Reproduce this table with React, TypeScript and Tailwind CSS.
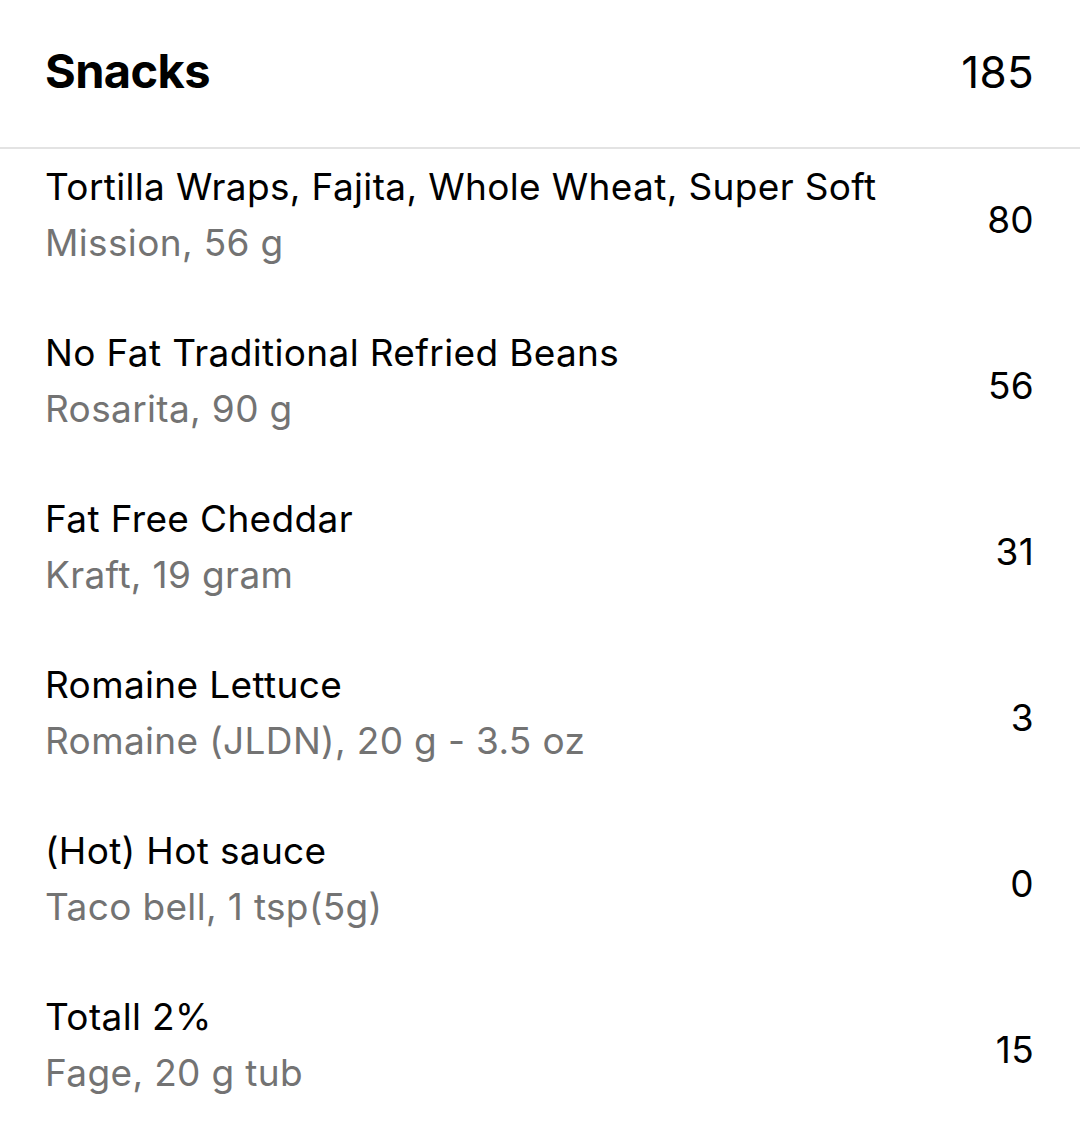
const items = [
  { name: "Tortilla Wraps, Fajita, Whole Wheat, Super Soft", detail: "Mission, 56 g", cal: 80 },
  { name: "No Fat Traditional Refried Beans", detail: "Rosarita, 90 g", cal: 56 },
  { name: "Fat Free Cheddar", detail: "Kraft, 19 gram", cal: 31 },
  { name: "Romaine Lettuce", detail: "Romaine (JLDN), 20 g - 3.5 oz", cal: 3 },
  { name: "(Hot) Hot sauce", detail: "Taco bell, 1 tsp(5g)", cal: 0 },
  { name: "Totall 2%", detail: "Fage, 20 g tub", cal: 15 },
];

export default function App() {
  return (
    <div className="w-[1080px] h-[1134px] overflow-hidden bg-white text-black font-['Inter',sans-serif]">
      {/* Section header */}
      <div className="h-[147px] flex items-center justify-between pl-[45px] pr-[46px] pb-[4px]">
        <h2 className="text-[47px] font-bold tracking-[-0.6px]">Snacks</h2>
        <span className="text-[44px] tracking-[0.3px]">185</span>
      </div>
      <div className="h-[2px] bg-[#e3e3e3]" />

      {/* Food rows */}
      <div className="flex flex-col">
        {items.map((item) => (
          <div key={item.name} className="flex items-center justify-between pl-[45px] pr-[46px] pt-[10px] pb-[44px]">
            <div className="flex flex-col tracking-[0.35px]">
              <span className="text-[37px] leading-[56px]">{item.name}</span>
              <span className="text-[37px] leading-[56px] text-[#737373]">{item.detail}</span>
            </div>
            <span className="mt-[10px] text-[37px] leading-[56px] tracking-[0.3px]">{item.cal}</span>
          </div>
        ))}
      </div>
    </div>
  );
}
